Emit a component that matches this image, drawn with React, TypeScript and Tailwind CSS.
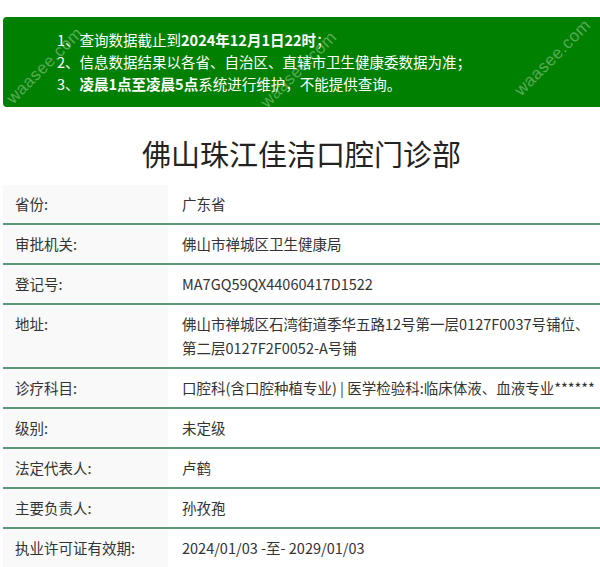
import React from 'react';

const rows: { label: string; value: React.ReactNode }[] = [
  { label: '省份:', value: '广东省' },
  { label: '审批机关:', value: '佛山市禅城区卫生健康局' },
  { label: '登记号:', value: 'MA7GQ59QX44060417D1522' },
  {
    label: '地址:',
    value: (
      <>
        佛山市禅城区石湾街道季华五路12号第一层0127F0037号铺位、
        <br />
        第二层0127F2F0052-A号铺
      </>
    ),
  },
  { label: '诊疗科目:', value: '口腔科(含口腔种植专业) | 医学检验科:临床体液、血液专业******' },
  { label: '级别:', value: '未定级' },
  { label: '法定代表人:', value: '卢鹤' },
  { label: '主要负责人:', value: '孙孜孢' },
  { label: '执业许可证有效期:', value: '2024/01/03 -至- 2029/01/03' },
];

function Mark({ className }: { className: string }) {
  return (
    <span
      className={`pointer-events-none absolute -rotate-45 select-none whitespace-nowrap text-[17px] tracking-wide text-white/35 ${className}`}
      style={{ fontFamily: '"Liberation Sans", sans-serif' }}
    >
      waasee.com
    </span>
  );
}

export default function App() {
  return (
    <div
      className="w-[600px] h-[567px] overflow-hidden bg-white text-[#333] text-[14.5px]"
      style={{ fontFamily: '"Noto Sans CJK SC", sans-serif' }}
    >
      <div className="pt-[17px] pl-[3px]">
        <div className="relative overflow-hidden rounded-l-[4px] bg-[#008000] h-[90px] pl-[54px] py-[12px] text-white leading-[22px]">
          <p>
            1、查询数据截止到<b>2024年12月1日22时</b>；
          </p>
          <p>2、信息数据结果以各省、自治区、直辖市卫生健康委数据为准；</p>
          <p>
            3、<b>凌晨1点至凌晨5点</b>系统进行维护，不能提供查询。
          </p>
          <Mark className="left-[-8px] top-[38px]" />
          <Mark className="left-[246px] top-[42px]" />
          <Mark className="left-[500px] top-[30px]" />
        </div>

        <h1 className="mt-[22px] mb-[8px] text-center text-[29px] leading-[48px] font-normal text-[#222]">
          佛山珠江佳洁口腔门诊部
        </h1>

        <div className="flex flex-col">
          {rows.map((r) => (
            <div key={r.label} className="flex border-b-2 border-[#5b9a7b] leading-[24px]">
              <div className="w-[165px] shrink-0 bg-[#f9f9f9] pl-[12px] py-[7px]">{r.label}</div>
              <div className="pl-[14px] py-[7px] whitespace-nowrap">{r.value}</div>
            </div>
          ))}
        </div>
      </div>
    </div>
  );
}
